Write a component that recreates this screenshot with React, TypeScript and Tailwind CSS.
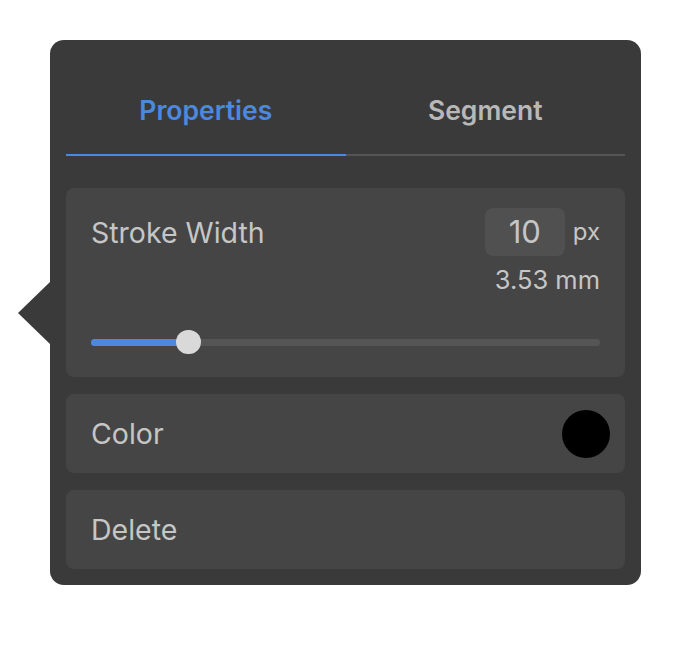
import React from "react";

export default function App() {
  const font = { fontFamily: "Inter, 'Noto Sans', sans-serif" };
  return (
    <div className="w-[674px] h-[647px] bg-white" style={font}>
      <div className="relative ml-[50px] pt-[40px] w-[591px]">
        <svg
          className="absolute left-[-32px] top-[281px]"
          width="33"
          height="64"
          viewBox="0 0 33 64"
        >
          <path d="M33 0 L0 32 L33 64 Z" fill="#3a3a3a" />
        </svg>
        <div className="w-[591px] h-[545px] bg-[#3a3a3a] rounded-[14px] px-4 flex flex-col">
          <div className="flex h-[114px]">
            <div className="flex-1 flex items-start justify-center pt-[55px] text-[26.5px] font-semibold text-[#4d88e0] leading-[30px]">
              Properties
            </div>
            <div className="flex-1 flex items-start justify-center pt-[55px] text-[26.5px] font-semibold text-[#b8b8b8] leading-[30px]">
              Segment
            </div>
          </div>
          <div className="flex h-[2px]">
            <div className="flex-1 bg-[#4d88e0]" />
            <div className="flex-1 bg-[#555555]" />
          </div>
          <div className="mt-[32px] h-[189px] bg-[#454545] rounded-[8px] px-[25px] flex flex-col">
            <div className="flex justify-between pt-[20px]">
              <div className="text-[28.5px] text-[#c6c6c6] leading-[48px] mt-[1px]">Stroke Width</div>
              <div className="flex flex-col items-end">
                <div className="flex items-center">
                  <div className="w-[80px] h-[48px] rounded-[8px] bg-[#505050] flex items-center justify-center text-[31px] text-[#c6c6c6]">
                    10
                  </div>
                  <div className="ml-[8px] text-[24px] text-[#c6c6c6]">px</div>
                </div>
                <div className="text-[25.5px] text-[#c6c6c6] leading-[28px] mt-[10px]">3.53 mm</div>
              </div>
            </div>
            <div className="relative mt-[36px] h-[24px] flex items-center">
              <div className="w-full h-[7px] rounded-full bg-[#555555] flex">
                <div className="w-[97px] h-full rounded-full bg-[#4d88e0]" />
              </div>
              <div className="absolute left-[85px] top-0 w-[25px] h-[24px] rounded-full bg-[#d9d9d9]" />
            </div>
          </div>
          <div className="mt-[17px] h-[79px] bg-[#454545] rounded-[8px] pl-[25px] pr-[15px] flex items-center justify-between">
            <div className="text-[28.5px] text-[#c6c6c6] mt-[2px]">Color</div>
            <div className="w-[48px] h-[48px] rounded-full bg-black" />
          </div>
          <div className="mt-[17px] h-[79px] bg-[#454545] rounded-[8px] px-[25px] flex items-center">
            <div className="text-[28.5px] text-[#c6c6c6] mt-[2px]">Delete</div>
          </div>
        </div>
      </div>
    </div>
  );
}
